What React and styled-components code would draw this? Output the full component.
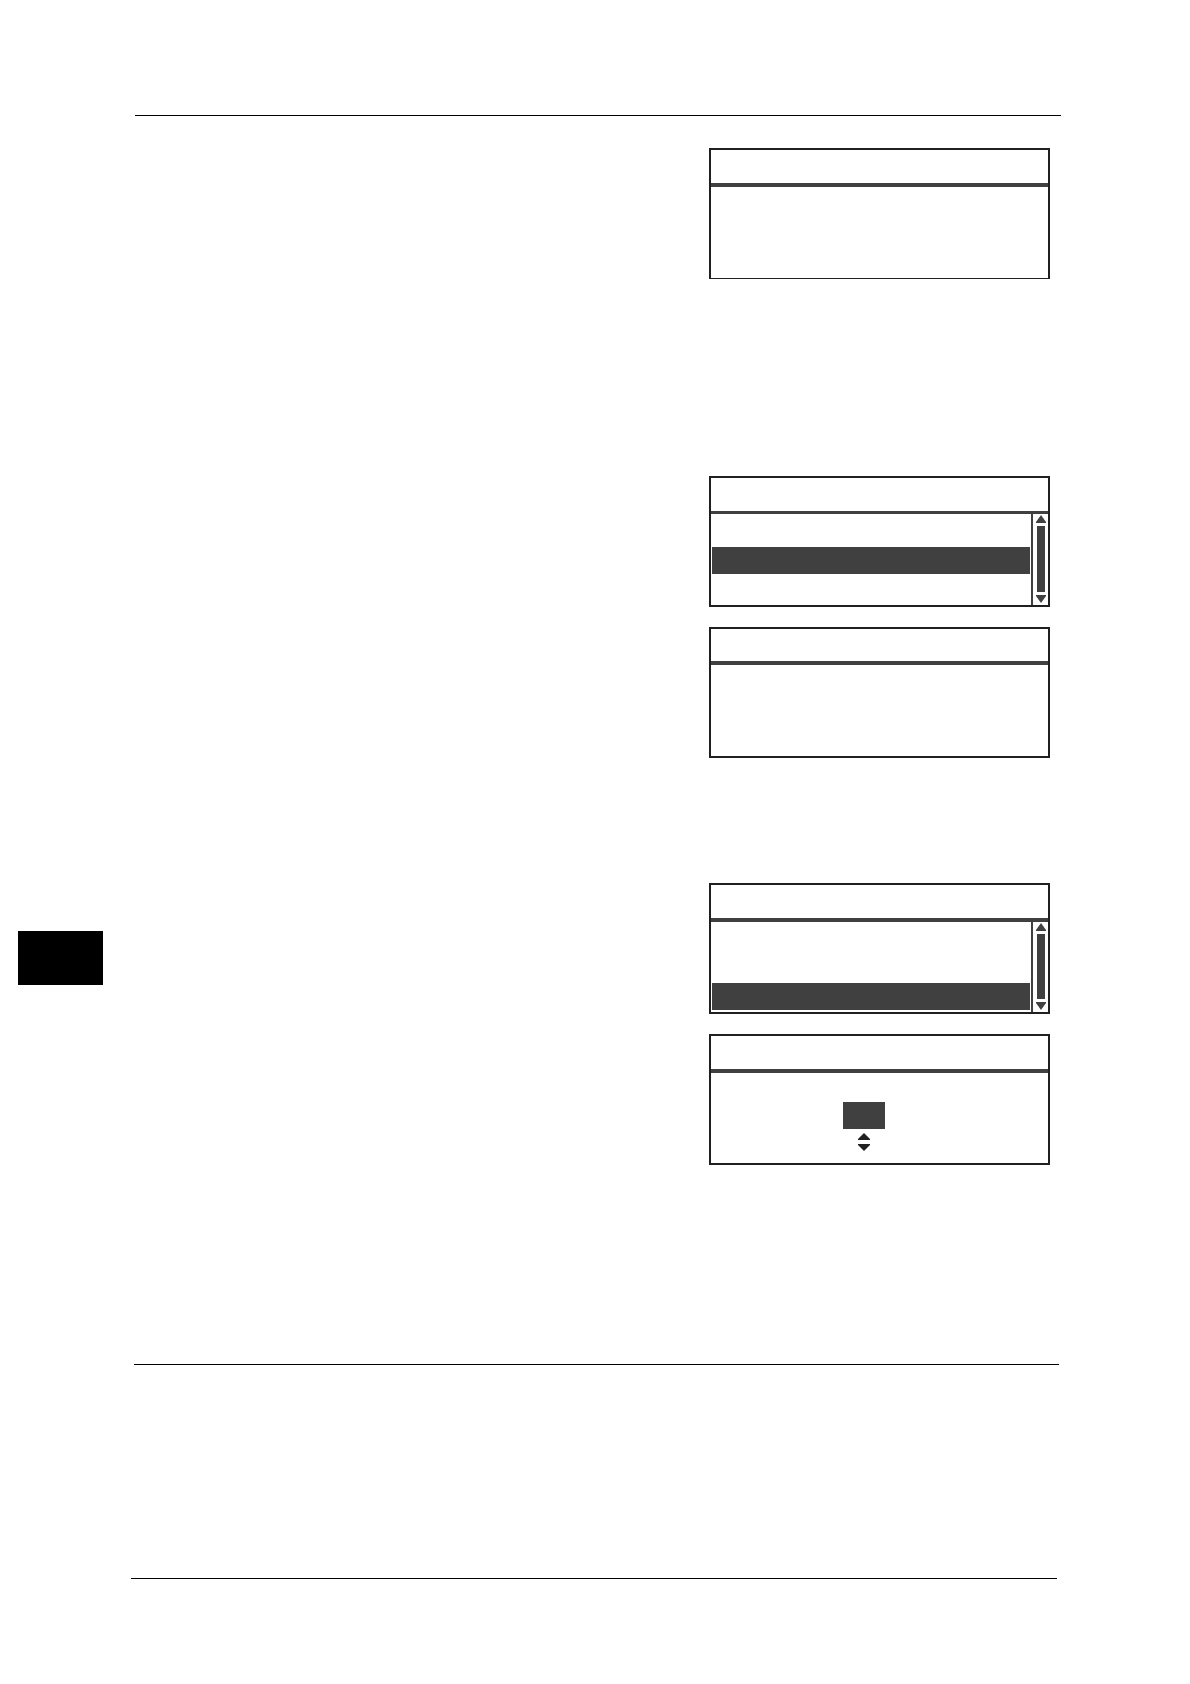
import React from "react";
import styled, { createGlobalStyle } from "styled-components";

const ink = "#202020";
const fill = "#404040";

const GlobalStyle = createGlobalStyle`
  *, *::before, *::after { box-sizing: border-box; }
  body {
    margin: 0;
    background: #ffffff;
    color: ${ink};
    font-family: "Liberation Sans", Arial, sans-serif;
  }
`;

const Page = styled.div`
  display: flex;
  flex-direction: column;
  padding: 115px 0 105px;
`;

const Rule = styled.hr`
  width: auto;
  height: 1px;
  margin: 0 ${(p) => p.$right}px 0 ${(p) => p.$left}px;
  border: 0;
  background: #000000;
`;

const Steps = styled.main`
  display: flex;
  flex-direction: column;
  padding: 32px 140px 199px 18px;
`;

const Footer = styled.footer`
  padding-top: 213px;
`;

const Step = styled.section`
  display: grid;
  grid-template-columns: 85px 1fr 341px;
  align-items: start;
  margin-bottom: ${(p) => p.$after || 0}px;
`;

const ChapterTab = styled.aside`
  grid-column: 1;
  height: 54px;
  margin-top: 48px;
  background: #000000;
`;

const Screens = styled.div`
  grid-column: 3;
  display: flex;
  flex-direction: column;
  gap: 20px;
`;

const Panel = styled.div`
  display: flex;
  flex-direction: column;
  min-height: 131px;
  border: 2px solid ${ink};
  border-bottom-width: ${(p) => (p.$thinBase ? 1 : 2)}px;
`;

const TitleBar = styled.header`
  height: ${(p) => p.$height + p.$line}px;
  border-bottom: ${(p) => p.$line}px solid ${fill};
`;

const PanelBody = styled.div`
  display: flex;
  flex: 1;
`;

const OptionList = styled.ul`
  display: flex;
  flex: 1;
  flex-direction: column;
  gap: 1px;
  margin: 0;
  padding: 5px 1px 0;
  list-style: none;
`;

const Option = styled.li`
  height: 27px;
  background: ${(p) => (p.$selected ? fill : "transparent")};
`;

const ScrollBar = styled.div`
  display: flex;
  flex-direction: column;
  align-items: center;
  gap: 3px;
  width: 17px;
  padding: 1px 2px 2px 3px;
  border-left: 2px solid ${fill};
`;

const Thumb = styled.div`
  flex: 1;
  width: 8px;
  background: ${fill};
`;

const ArrowButton = styled.button`
  display: block;
  padding: 0;
  border: 0;
  background: none;
  color: ${(p) => p.$color};
  line-height: 0;

  svg { display: block; }
`;

const ValueField = styled.div`
  display: flex;
  flex: 1;
  flex-direction: column;
  align-items: center;
  padding: 29px 31px 0 0;
`;

const ValueInput = styled.input`
  width: 42px;
  height: 27px;
  margin-bottom: 4px;
  padding: 0 4px;
  border: 0;
  border-radius: 0;
  background: ${fill};
  color: #ffffff;
  font: inherit;
  text-align: center;
`;

const Stepper = styled.div`
  display: flex;
  flex-direction: column;
  gap: 4px;
`;

function Arrow({ down, label, width, height, color }) {
  const w = width;
  const h = height;
  const points = down
    ? `0,0 ${w},0 ${w},1 ${w / 2},${h} 0,1`
    : `0,${h} ${w},${h} ${w},${h - 1} ${w / 2},0 0,${h - 1}`;
  return (
    <ArrowButton type="button" aria-label={label} $color={color}>
      <svg width={w} height={h} viewBox={`0 0 ${w} ${h}`} aria-hidden="true">
        <polygon points={points} fill="currentColor" />
      </svg>
    </ArrowButton>
  );
}

function Screen({ titleHeight = 33, line = 4, thinBase, children }) {
  return (
    <Panel $thinBase={thinBase}>
      <TitleBar $height={titleHeight} $line={line} />
      <PanelBody>{children}</PanelBody>
    </Panel>
  );
}

function MenuScreen({ selected, line }) {
  return (
    <Screen line={line}>
      <OptionList>
        {[0, 1, 2].map((i) => (
          <Option key={i} $selected={i === selected} />
        ))}
      </OptionList>
      <ScrollBar>
        <Arrow label="Scroll up" width={10} height={8} color={fill} />
        <Thumb />
        <Arrow down label="Scroll down" width={10} height={8} color={fill} />
      </ScrollBar>
    </Screen>
  );
}

function ValueScreen() {
  return (
    <Screen>
      <ValueField>
        <ValueInput type="text" aria-label="Value" />
        <Stepper>
          <Arrow label="Increase" width={12} height={7} color={ink} />
          <Arrow down label="Decrease" width={12} height={7} color={ink} />
        </Stepper>
      </ValueField>
    </Screen>
  );
}

export default function App() {
  return (
    <>
      <GlobalStyle />
      <Page>
        <Rule $left={135} $right={129} />
        <Steps>
          <Step $after={197}>
            <Screens>
              <Screen thinBase />
            </Screens>
          </Step>
          <Step $after={125}>
            <Screens>
              <MenuScreen selected={1} line={3} />
              <Screen titleHeight={32} />
            </Screens>
          </Step>
          <Step>
            <ChapterTab />
            <Screens>
              <MenuScreen selected={2} />
              <ValueScreen />
            </Screens>
          </Step>
        </Steps>
        <Rule $left={134} $right={131} />
        <Footer>
          <Rule $left={131} $right={133} />
        </Footer>
      </Page>
    </>
  );
}
